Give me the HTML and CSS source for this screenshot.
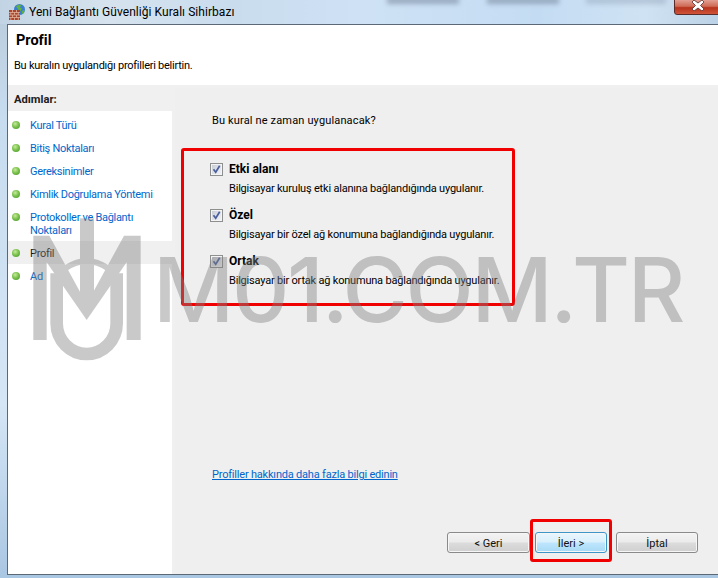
FILE: index.html
```html
<!DOCTYPE html>
<html lang="tr">
<head>
<meta charset="utf-8">
<title>Yeni Bağlantı Güvenliği Kuralı Sihirbazı</title>
<link rel="stylesheet" href="styles.css">
</head>
<body>
<div class="window">
  <header class="titlebar">
    <svg class="app-icon" width="18" height="18" viewBox="0 0 18 18">
      <circle cx="11.5" cy="6.5" r="5.5" fill="#3a7fd0"/>
      <path d="M8 3.5c2-1.8 4-2 5-1.300l-1 2.300 2 1-1.500 2.500-2-1-1-2z" fill="#63b33c"/>
      <path d="M14 8l2.500-1-.5 2.500-2 1.500z" fill="#63b33c"/>
      <rect x="1" y="7" width="11" height="10" fill="#a8452c"/>
      <path d="M1 9.500h11M1 12h11M1 14.500h11M4.500 7v2.500M8.500 7v2.500M2.800 9.500V12M6.500 9.500V12M10.300 9.500V12M4.500 12v2.500M8.500 12v2.500M2.800 14.500V17M6.500 14.500V17M10.300 14.500V17" stroke="#e3b39c" stroke-width=".8" fill="none"/>
    </svg>
    <span class="title-text">Yeni Bağlantı Güvenliği Kuralı Sihirbazı</span>
    <span class="smudge smudge-a"></span>
    <span class="smudge smudge-b"></span>
    <span class="smudge smudge-c"></span>
    <button class="close" type="button" aria-label="Kapat">
      <svg width="14" height="11" viewBox="0 0 14 11"><path d="M3 0l4 3 4-3 2 2-3.500 3.500L13 9l-2 2-4-3-4 3-2-2 3.500-3.500L1 2z" fill="#fff" stroke="#5b2a2a" stroke-width=".8"/></svg>
    </button>
  </header>

  <div class="client">
    <div class="page-head">
      <h1 class="page-title">Profil</h1>
      <p class="page-sub">Bu kuralın uygulandığı profilleri belirtin.</p>
    </div>

    <div class="content">
      <aside class="steps">
        <div class="steps-head">Adımlar:</div>
        <ul class="step-list">
          <li class="step"><i class="dot"></i><a class="step-label">Kural Türü</a></li>
          <li class="step"><i class="dot"></i><a class="step-label">Bitiş Noktaları</a></li>
          <li class="step"><i class="dot"></i><a class="step-label">Gereksinimler</a></li>
          <li class="step"><i class="dot"></i><a class="step-label">Kimlik Doğrulama Yöntemi</a></li>
          <li class="step step-tall"><i class="dot"></i><a class="step-label">Protokoller ve Bağlantı Noktaları</a></li>
          <li class="step step-current"><i class="dot"></i><a class="step-label">Profil</a></li>
          <li class="step"><i class="dot"></i><a class="step-label">Ad</a></li>
        </ul>
      </aside>

      <main class="main">
        <p class="question">Bu kural ne zaman uygulanacak?</p>
        <div class="options">
          <div class="option">
            <label class="option-head">
              <svg class="check" width="13" height="13" viewBox="0 0 13 13"><use href="#checkbox"/></svg>
              <span class="option-name">Etki alanı</span>
            </label>
            <p class="option-desc">Bilgisayar kuruluş etki alanına bağlandığında uygulanır.</p>
          </div>
          <div class="option">
            <label class="option-head">
              <svg class="check" width="13" height="13" viewBox="0 0 13 13"><use href="#checkbox"/></svg>
              <span class="option-name">Özel</span>
            </label>
            <p class="option-desc">Bilgisayar bir özel ağ konumuna bağlandığında uygulanır.</p>
          </div>
          <div class="option">
            <label class="option-head">
              <svg class="check" width="13" height="13" viewBox="0 0 13 13"><use href="#checkbox"/></svg>
              <span class="option-name">Ortak</span>
            </label>
            <p class="option-desc">Bilgisayar bir ortak ağ konumuna bağlandığında uygulanır.</p>
          </div>
        </div>
        <a class="more-link">Profiller hakkında daha fazla bilgi edinin</a>
        <div class="actions">
          <button class="btn btn-back" type="button">&lt; Geri</button>
          <button class="btn btn-next" type="button">İleri &gt;</button>
          <button class="btn btn-cancel" type="button">İptal</button>
        </div>
      </main>
    </div>
  </div>
  <div class="frame-bottom"></div>
</div>

<div class="mark-options"></div>
<div class="mark-next"></div>

<svg class="logo" width="140" height="165" viewBox="0 0 420 495">
  <g fill="#808080" stroke="none">
    <path d="M40 405V92h48l112 205L312 92h50v313h-42V172L200 345 80 172v233z"/>
    <rect x="180" y="40" width="42" height="262"/>
  </g>
  <path d="M136 190Q200 146 264 190" fill="none" stroke="#808080" stroke-width="18"/>
  <path d="M110 205V355A90 92 0 0 0 290 355V205" fill="none" stroke="#808080" stroke-width="38"/>
</svg>
<div class="wordmark">M01.COM.TR</div>

<svg width="0" height="0" class="defs">
  <defs>
    <linearGradient id="boxfill" x1="0" y1="0" x2="1" y2="1">
      <stop offset="0" stop-color="#c9cdd6"/><stop offset="1" stop-color="#f2f3f6"/>
    </linearGradient>
    <g id="checkbox">
      <rect x=".5" y=".5" width="12" height="12" fill="#f4f4f4" stroke="#8e8f8f"/>
      <rect x="2" y="2" width="9" height="9" fill="url(#boxfill)"/>
      <path d="M3.500 6.200l2.200 3L9.700 2.800" fill="none" stroke="#4a5f9c" stroke-width="1.700"/>
    </g>
  </defs>
</svg>
</body>
</html>
```
FILE: styles.css
```css
* { box-sizing: border-box; }
html, body { margin: 0; padding: 0; height: 100%; overflow: hidden; }
body {
  font-family: "Roboto", "Noto Sans", sans-serif;
  font-size: 11px;
  color: #000;
  position: relative;
  width: 718px;
  height: 578px;
}
p, h1, ul { margin: 0; padding: 0; }

.window {
  width: 718px;
  height: 578px;
  display: flex;
  flex-direction: column;
  background: linear-gradient(180deg, #b9cbdb 0, #c7dcef 20%, #d5e6f6 70%, #a9c6e2 100%);
}

.titlebar {
  position: relative;
  height: 24px;
  flex: none;
  display: flex;
  align-items: center;
  gap: 3px;
  padding-left: 8px;
  overflow: hidden;
  background: linear-gradient(90deg, #c2d4e4 0, #d6e3ee 15%, #c9dcee 32%, #cfe2f5 50%, #c4dcf3 75%, #cfe2f3 90%, #bcd2e6 100%);
}
.app-icon { flex: none; }
.title-text { font-size: 12px; letter-spacing: .05px; }

.smudge {
  position: absolute;
  top: -3px;
  height: 7px;
  background: #7d8ea3;
  filter: blur(2.500px);
  opacity: .65;
}
.smudge-a { left: 387px; width: 72px; }
.smudge-b { left: 487px; width: 72px; }
.smudge-c { left: 586px; width: 80px; opacity: .35; }

.close {
  position: absolute;
  top: -1px;
  right: -3px;
  width: 47px;
  height: 16px;
  padding: 0;
  display: flex;
  align-items: flex-start;
  justify-content: center;
  border: 1px solid #5b2c2c;
  border-radius: 0 0 3px 3px;
  background: linear-gradient(180deg, #e2a093 0, #cf6a56 45%, #b6321c 55%, #d0553a 100%);
}

.client {
  flex: 1;
  margin-left: 7px;
  display: flex;
  flex-direction: column;
  border: solid #5c6875;
  border-width: 1px 0 1px 1px;
  background: #fff;
  min-height: 0;
}

.page-head {
  height: 60px;
  flex: none;
  padding: 7px 0 0 6px;
}
.page-title {
  font-size: 14.500px;
  font-weight: 700;
  line-height: 18px;
  margin-left: 2px;
}
.page-sub {
  margin-top: 8px;
  line-height: 16px;
  letter-spacing: -.25px;
}

.content {
  flex: 1;
  display: flex;
  gap: 3px;
  border-top: 3px solid #f0f0f0;
  background: #f0f0f0;
  min-height: 0;
}

.steps {
  width: 164px;
  flex: none;
  background: #fff;
}
.steps-head {
  height: 23px;
  padding-left: 6px;
  line-height: 24px;
  font-weight: 700;
  font-size: 11.200px;
  color: #202020;
  background: #f0f0f0;
}
.step-list { list-style: none; padding-top: 2px; }
.step {
  position: relative;
  height: 23px;
  padding: 1px 0 0 22px;
  display: flex;
  align-items: center;
  line-height: 13px;
  letter-spacing: -.3px;
}
.step-tall {
  height: 36px;
  align-items: flex-start;
  padding-top: 6px;
  padding-right: 10px;
}
.step-current { background: #f0f0f0; }
.step-current .step-label { color: #111; }
.step-label { color: #0066cc; }
.dot {
  position: absolute;
  left: 4px;
  top: 8px;
  width: 8px;
  height: 8px;
  border-radius: 50%;
  background: radial-gradient(circle at 40% 35%, #c5ea9c 0, #7cc24d 45%, #3f9426 100%);
}

.main {
  flex: 1;
  min-width: 0;
  display: flex;
  flex-direction: column;
  padding: 24px 20px 21px 37px;
  background: #efefef;
}
.question { line-height: 17px; letter-spacing: .15px; }
.options {
  margin-top: 32px;
  margin-left: -2px;
  display: flex;
  flex-direction: column;
  gap: 10px;
}
.option { height: 36px; }
.option-head {
  display: flex;
  align-items: center;
  gap: 6px;
  height: 16px;
  font-weight: 700;
}
.option-name { font-size: 12px; }
.check { flex: none; }
.option-desc {
  margin-top: 4px;
  margin-left: 19px;
  line-height: 16px;
  letter-spacing: -.2px;
}

.more-link {
  margin-top: auto;
  color: #0066cc;
  text-decoration: underline;
  line-height: 16px;
  letter-spacing: -.2px;
}

.actions {
  margin-top: 49px;
  display: flex;
  justify-content: flex-end;
  height: 21px;
}
.btn {
  font: inherit;
  padding: 1px 0 0;
  height: 21px;
  border: 1px solid #8a8a8a;
  border-radius: 3px;
  color: #111;
  background: linear-gradient(180deg, #f3f3f3 0, #ebebeb 48%, #dcdcdc 52%, #cfcfcf 100%);
  box-shadow: inset 0 0 0 1px #f6f6f6;
}
.btn-back { width: 83px; }
.btn-next {
  width: 72px;
  margin-left: 5px;
  border-color: #3d95c8;
  background: linear-gradient(180deg, #eaf6fd 0, #d9f0fc 48%, #bee6fd 52%, #a7d9f5 100%);
}
.btn-cancel { width: 82px; margin-left: 9px; }

.frame-bottom { height: 3px; flex: none; }

.mark-options,
.mark-next {
  position: absolute;
  border: 3px solid #f00000;
  border-radius: 3px;
  pointer-events: none;
}
.mark-options { left: 181px; top: 148px; width: 334px; height: 158px; }
.mark-next { left: 530px; top: 519px; width: 82px; height: 43px; }

.logo {
  position: absolute;
  left: 20px;
  top: 205px;
  opacity: .42;
  pointer-events: none;
}
.wordmark {
  position: absolute;
  left: 153px;
  top: 237px;
  font-family: "Inter", sans-serif;
  font-weight: 500;
  font-size: 89px;
  line-height: 105px;
  letter-spacing: -2.300px;
  color: #808080;
  opacity: .42;
  white-space: nowrap;
  pointer-events: none;
}
.defs { position: absolute; }
```
